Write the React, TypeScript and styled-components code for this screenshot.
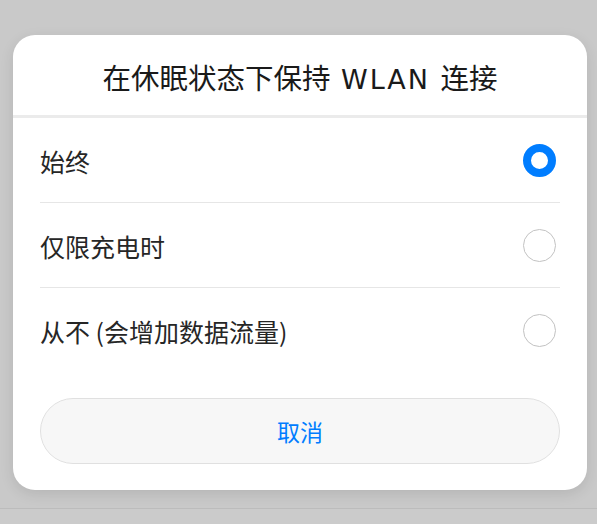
import React, { useState } from "react";
import styled, { createGlobalStyle } from "styled-components";

const Global = createGlobalStyle`
  html, body { margin: 0; padding: 0; }
  body {
    background: #cbcbcb;
    font-family: "Noto Sans CJK SC", "Noto Sans", sans-serif;
    -webkit-font-smoothing: antialiased;
  }
`;

const Page = styled.div`
  width: 597px;
  height: 524px;
  display: flex;
  flex-direction: column;
  overflow: hidden;
`;

const Stage = styled.div`
  height: 508px;
  box-sizing: border-box;
  padding: 35px 10px 0 13px;
  background: #c9c9c9;
`;

const BottomBar = styled.div`
  flex: 1;
  border-top: 1px solid #bcbcbc;
  background: #cbcbcb;
`;

const Dialog = styled.div`
  width: 574px;
  background: #ffffff;
  border-radius: 22px;
  box-shadow: 0 4px 14px rgba(0, 0, 0, 0.1);
  overflow: hidden;
  display: flex;
  flex-direction: column;
`;

const Header = styled.div`
  height: 83px;
  box-sizing: border-box;
  display: flex;
  align-items: center;
  justify-content: center;
  border-bottom: 3px solid #ebebeb;
  padding-top: 2px;
`;

const Title = styled.h1`
  margin: 0;
  font-size: 28.5px;
  font-weight: 400;
  color: #1a1a1a;
  white-space: nowrap;
  display: flex;
  align-items: baseline;
`;

const Latin = styled.span`
  font-family: "DejaVu Sans", "Noto Sans", sans-serif;
  font-size: 27px;
  letter-spacing: 2px;
  white-space: pre;
`;

const Body = styled.div`
  padding: 0 27px 26px 27px;
  display: flex;
  flex-direction: column;
`;

const List = styled.div`
  display: flex;
  flex-direction: column;
`;

const Row = styled.div<{ $last?: boolean }>`
  height: 84px;
  display: flex;
  align-items: center;
  justify-content: space-between;
  border-bottom: ${(p) => (p.$last ? "none" : "1px solid #e6e6e6")};
  cursor: pointer;
`;

const Label = styled.span`
  font-size: 25px;
  color: #262626;
  padding-top: 1px;
`;

const Radio = styled.span<{ $checked: boolean }>`
  width: 33px;
  height: 33px;
  box-sizing: border-box;
  border-radius: 50%;
  margin-right: 4px;
  border: ${(p) => (p.$checked ? "8px solid #007dff" : "1.5px solid #c2c2c2")};
  background: #fff;
`;

const CancelButton = styled.button`
  margin-top: 26px;
  height: 66px;
  width: 100%;
  border-radius: 33px;
  border: 1px solid #e0e0e0;
  background: #f7f7f7;
  color: #007dff;
  font-family: "Noto Sans CJK SC", "Noto Sans", sans-serif;
  font-size: 23px;
  cursor: pointer;
`;

const options = ["始终", "仅限充电时", "从不 (会增加数据流量)"];

export default function App() {
  const [selected, setSelected] = useState(0);
  return (
    <>
      <Global />
      <Page>
        <Stage>
          <Dialog>
            <Header>
              <Title>
                <span>在休眠状态下保持</span>
                <Latin> WLAN </Latin>
                <span>连接</span>
              </Title>
            </Header>
            <Body>
              <List>
                {options.map((o, i) => (
                  <Row key={o} $last={i === options.length - 1} onClick={() => setSelected(i)}>
                    <Label>{o}</Label>
                    <Radio $checked={selected === i} />
                  </Row>
                ))}
              </List>
              <CancelButton>取消</CancelButton>
            </Body>
          </Dialog>
        </Stage>
        <BottomBar />
      </Page>
    </>
  );
}
